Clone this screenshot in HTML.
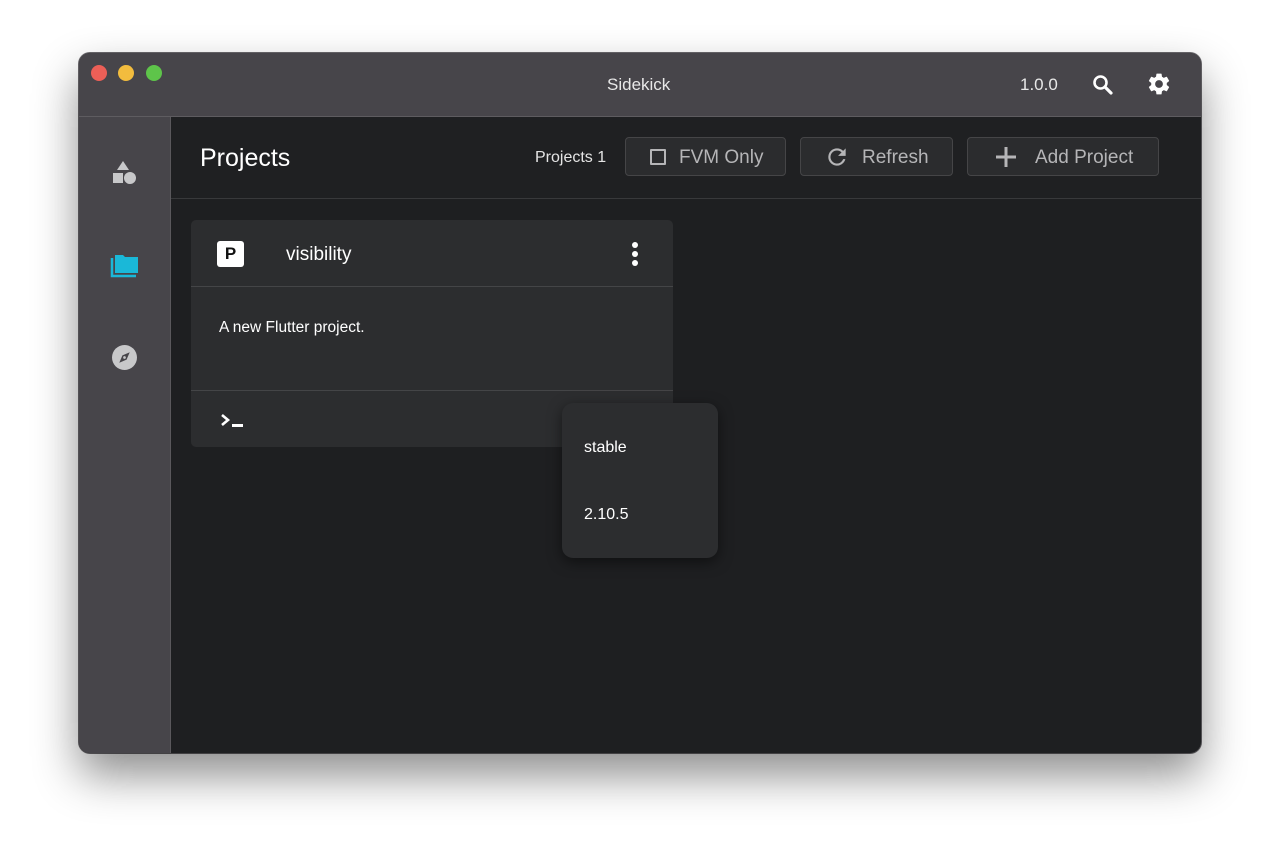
<!DOCTYPE html>
<html><head><style>
body{margin:0;width:1280px;height:858px;background:#fff;position:relative;overflow:hidden;font-family:"Liberation Sans",sans-serif;}
.win{position:absolute;left:79px;top:53px;width:1122px;height:700px;border-radius:11px;background:#1e1f21;overflow:hidden;box-shadow:0 22px 45px rgba(0,0,0,.45),0 0 0 1px #6a686c;}
.title{position:absolute;left:0;top:0;width:1122px;height:63px;background:#47454a;border-bottom:1px solid #5e5c60;}
.dot{position:absolute;top:12px;width:16px;height:16px;border-radius:50%;}
.side{position:absolute;left:0;top:64px;width:91px;height:636px;background:#47454a;border-right:1px solid #5a585c;}
.t{position:absolute;color:#fff;white-space:nowrap;}
.btn{position:absolute;top:84px;height:39px;border:1px solid #454547;border-radius:4px;background:#2b2c2e;box-sizing:border-box;color:#b5b5b7;font-size:19px;}
.card{position:absolute;left:112px;top:167px;width:482px;height:227px;background:#2c2d2f;border-radius:5px;}
.pop{position:absolute;left:483px;top:350px;width:156px;height:155px;background:#2c2d2f;border-radius:11px;box-shadow:0 4px 14px rgba(0,0,0,.5);}
</style></head><body>
<div class="win">
 <div class="title">
  <div class="dot" style="left:12px;background:#ec5f57"></div>
  <div class="dot" style="left:39px;background:#f2bc3e"></div>
  <div class="dot" style="left:67px;background:#5ec44a"></div>
  <div class="t" style="left:528px;top:22px;font-size:17px;color:#e8e8e8">Sidekick</div>
  <div class="t" style="left:941px;top:22px;font-size:17px;color:#e8e8e8">1.0.0</div>
  <svg style="position:absolute;left:1012px;top:20px" width="24" height="24" viewBox="0 0 24 24"><circle cx="9.5" cy="9.5" r="6" fill="none" stroke="#fff" stroke-width="2.6"/><path d="M14 14l6 6" stroke="#fff" stroke-width="3.2" stroke-linecap="round"/></svg>
  <svg style="position:absolute;left:1067px;top:18px" width="26" height="26" viewBox="0 0 24 24"><path fill="#fff" d="M19.14 12.940c.04-.3.06-.61.06-.94s-.02-.64-.07-.94l2.030-1.58a.49.49 0 0 0 .12-.61l-1.92-3.32a.49.49 0 0 0-.59-.22l-2.39.96c-.5-.38-1.03-.7-1.62-.94l-.36-2.54a.48.48 0 0 0-.48-.41h-3.84c-.24 0-.43.17-.47.41l-.36 2.54c-.59.24-1.13.57-1.62.94l-2.39-.96a.48.48 0 0 0-.59.22L2.740 8.870c-.12.21-.08.47.12.61l2.030 1.58c-.05.3-.09.63-.09.94s.02.64.07.94l-2.030 1.58a.49.49 0 0 0-.12.61l1.920 3.320c.12.22.37.29.59.22l2.390-.96c.5.38 1.030.7 1.620.94l.36 2.540c.05.24.24.41.48.41h3.840c.24 0 .44-.17.47-.41l.36-2.540c.59-.24 1.130-.56 1.620-.94l2.390.96c.22.08.47 0 .59-.22l1.920-3.320c.12-.22.07-.47-.12-.61l-2.010-1.580zM12 15.6A3.6 3.6 0 1 1 12 8.4a3.6 3.6 0 0 1 0 7.2z"/></svg>
 </div>
 <div class="side">
  <svg style="position:absolute;left:33px;top:43px" width="25" height="26" viewBox="0 0 25 26"><path d="M11 1l6 9H5z" fill="#c8c8ca"/><rect x="1" y="13" width="10" height="10" fill="#c8c8ca"/><circle cx="18" cy="18" r="6" fill="#c8c8ca"/></svg>
  <svg style="position:absolute;left:31px;top:135px" width="30" height="26" viewBox="0 0 30 26"><path d="M2 6v18h24" fill="none" stroke="#1ab8d8" stroke-width="2.5"/><path d="M5 3h8l2 2h13v16H5z" fill="#1ab8d8"/></svg>
  <svg style="position:absolute;left:33px;top:228px" width="25" height="25" viewBox="0 0 24 24"><circle cx="12" cy="12" r="12" fill="#c8c8ca"/><path d="M17 7l-7 3-3 7 7-3z" fill="#47454a"/><circle cx="12" cy="12" r="1.3" fill="#c8c8ca"/></svg>
 </div>
 <div style="position:absolute;left:92px;top:64px;right:0;height:81px;border-bottom:1px solid #38393b;background:#1f2022"></div>
 <div class="t" style="left:121px;top:91px;font-size:25px">Projects</div>
 <div class="t" style="left:456px;top:96px;font-size:16px;color:#e4e4e4">Projects 1</div>
 <div class="btn" style="left:546px;width:161px"><div style="position:absolute;left:24px;top:11px;width:12px;height:12px;border:2px solid #b5b5b7;border-radius:1px"></div><span style="position:absolute;left:53px;top:9px">FVM Only</span></div>
 <div class="btn" style="left:721px;width:153px"><svg style="position:absolute;left:23px;top:6px" width="26" height="26" viewBox="0 0 24 24"><path fill="#b5b5b7" d="M17.65 6.35A7.96 7.96 0 0 0 12 4a8 8 0 1 0 7.73 10h-2.08A6 6 0 1 1 12 6c1.66 0 3.14.69 4.22 1.78L13 11h7V4z"/></svg><span style="position:absolute;left:61px;top:9px">Refresh</span></div>
 <div class="btn" style="left:888px;width:192px"><svg style="position:absolute;left:27px;top:8px" width="22" height="22" viewBox="0 0 22 22"><path d="M11 1v20M1 11h20" stroke="#b5b5b7" stroke-width="3"/></svg><span style="position:absolute;left:67px;top:9px">Add Project</span></div>
 <div class="card">
  <div style="position:absolute;left:26px;top:21px;width:27px;height:26px;background:#fff;border-radius:3px;color:#111;font-weight:bold;font-size:17px;text-align:center;line-height:26px">P</div>
  <div class="t" style="left:95px;top:24px;font-size:19px">visibility</div>
  <svg style="position:absolute;left:440px;top:21px" width="8" height="26"><circle cx="4" cy="4" r="3" fill="#fff"/><circle cx="4" cy="13" r="3" fill="#fff"/><circle cx="4" cy="22" r="3" fill="#fff"/></svg>
  <div style="position:absolute;left:0;top:66px;width:482px;height:1px;background:#444547"></div>
  <div class="t" style="left:28px;top:99px;font-size:15.5px">A new Flutter project.</div>
  <div style="position:absolute;left:0;top:170px;width:482px;height:1px;background:#444547"></div>
  <svg style="position:absolute;left:30px;top:194px" width="24" height="14"><path d="M1 1l6 5-6 5" fill="none" stroke="#fff" stroke-width="2.6"/><rect x="11" y="10" width="11" height="3" fill="#fff"/></svg>
 </div>
 <div class="pop">
  <div class="t" style="left:22px;top:36px;font-size:16px">stable</div>
  <div class="t" style="left:22px;top:103px;font-size:16px">2.10.5</div>
 </div>
</div>
</body></html>
